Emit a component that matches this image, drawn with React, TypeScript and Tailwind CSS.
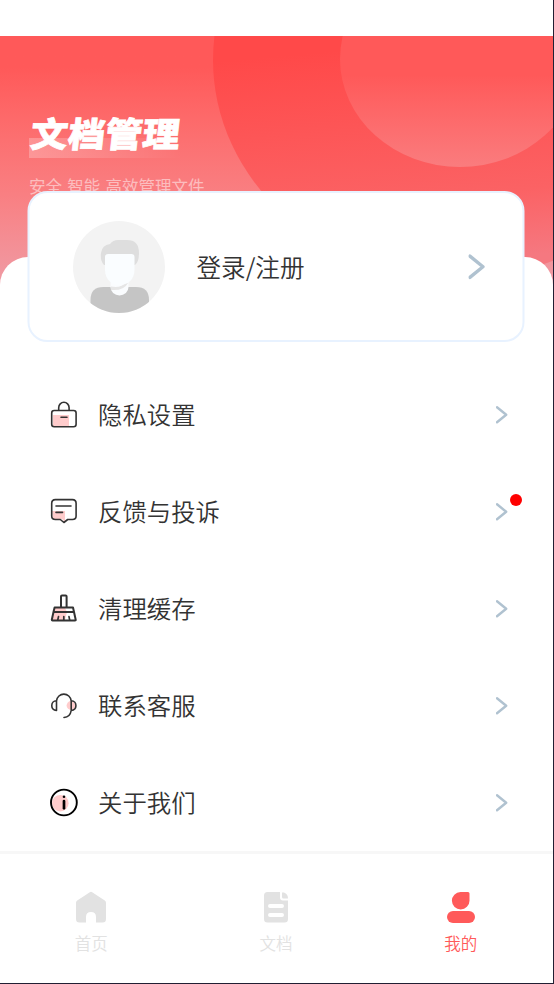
import type { ReactNode } from "react";

function Chevron({ className }: { className: string }) {
  return (
    <svg viewBox="0 0 12 18" className={className} fill="none" stroke="#b0c2d0" strokeWidth="2.4" strokeLinecap="round" strokeLinejoin="round">
      <path d="M1 1.3 10.2 8.800 1 16.3" />
    </svg>
  );
}

function Icon({ children }: { children: ReactNode }) {
  return (
    <svg viewBox="0 0 30 30" className="h-[30px] w-[30px] shrink-0" fill="none" stroke="#333333" strokeWidth="1.6" strokeLinecap="round" strokeLinejoin="round">
      {children}
    </svg>
  );
}

const lockIcon = (
  <Icon>
    <path d="M4 15h16v11.500H4z" fill="#ffcccc" stroke="none" />
    <rect x="2.7" y="10.500" width="24.4" height="16.3" rx="2.5" />
    <path d="M9.700 10V7.700a5.200 5.400 0 0 1 10.400 0V10M12 17.300h6" />
  </Icon>
);
const feedbackIcon = (
  <Icon>
    <path d="M3 14h13v11l-3-3H4z" fill="#ffcccc" stroke="none" />
    <path d="M6.400 2.600h17q3.700 0 3.700 3.700v12.700q0 3.500-3.700 3.500h-4.700L14.900 25.500l-3.600-3H6.400q-3.700 0-3.700-3.500V6.300q0-3.700 3.700-3.700ZM7 9h15M7 15.400h6.500" />
  </Icon>
);
const broomIcon = (
  <Icon>
    <path d="M6 14h10l2 4-2 8H3.500z" fill="#ffcccc" stroke="none" />
    <path strokeWidth="2" d="M12 13.500V2.500q0-1 1-1h3.600q1 0 1 1v11M5.600 13.500h18.400l1 4.500H4.500ZM4.500 18 2.800 25.800q0 .7.700.7h22.500q.8 0 .7-.7L25 18" />
    <path strokeWidth="1.700" d="M9.500 22.600l-.8 3.600M14.800 22.600v3.600M20 22.600l.7 3.600" />
  </Icon>
);
const serviceIcon = (
  <Icon>
    <circle cx="22" cy="14.500" r="4.400" fill="#ffcccc" stroke="none" />
    <path d="M7.500 9.800v9.700c-6.300.2-6.300-9.700 0-9.700ZM7.500 9.800a7.400 7.600 0 0 1 14.700 0M22.200 9.800v9.700c6.300.2 6.300-9.700 0-9.700ZM22.200 19.500c-.7 4.500-3.600 6.800-7.200 7" />
  </Icon>
);
const aboutIcon = (
  <Icon>
    <circle cx="11.300" cy="15.200" r="8.300" fill="#ffcccc" stroke="none" />
    <circle cx="14.900" cy="14.500" r="12.900" stroke="#000" strokeWidth="1.900" />
    <path d="M15 13V20.300" stroke="#000" strokeWidth="2.700" />
    <path d="M15 8.800h.01" stroke="#000" strokeWidth="2.600" />
  </Icon>
);

const rows = [
  { label: "隐私设置", icon: lockIcon },
  { label: "反馈与投诉", icon: feedbackIcon, unread: true },
  { label: "清理缓存", icon: broomIcon },
  { label: "联系客服", icon: serviceIcon },
  { label: "关于我们", icon: aboutIcon },
];

function Tab({ label, active, children }: { label: string; active?: boolean; children: ReactNode }) {
  return (
    <button className={"flex flex-1 flex-col items-center pt-[37px] " + (active ? "text-[#ff5a5a]" : "text-[#e2e2e2]")}>
      <svg viewBox="0 0 32 32" className="h-8 w-8" fill="currentColor">
        {children}
      </svg>
      <span className="mt-2 text-[16.500px] leading-6">{label}</span>
    </button>
  );
}

export default function App() {
  return (
    <div className="flex h-[984px] w-[554px] flex-col overflow-hidden border-r border-b border-[#211f33] bg-white font-['Noto_Sans_CJK_SC',sans-serif] font-[350] text-[#333]">
      <header className="relative mt-9 h-[264px] shrink-0 overflow-hidden bg-linear-to-b from-[#ff5959] from-12% via-[#f97f82] via-60% to-[#ed9faa]">
        <svg viewBox="0 0 553 264" className="absolute inset-0 h-full w-full">
          <defs>
            <linearGradient id="ring" x1="0" y1="0" x2="0.100" y2="1">
              <stop offset="0.500" stopColor="#ff4949" />
              <stop offset="0.850" stopColor="#fb6264" />
              <stop offset="1" stopColor="#f57880" />
            </linearGradient>
            <linearGradient id="disc" gradientUnits="userSpaceOnUse" x1="0" y1="0" x2="0" y2="131">
              <stop offset="0.300" stopColor="#ff5959" />
              <stop offset="1" stopColor="#fa7c7e" />
            </linearGradient>
          </defs>
          <ellipse cx="456" cy="24" rx="243" ry="219" fill="url(#ring)" />
          <ellipse cx="460" cy="23" rx="120" ry="108" fill="url(#disc)" />
        </svg>
        <div className="relative ml-[29px] pt-[78px]">
          <div className="h-11 w-[180px] bg-linear-to-r from-white/25 to-white/0 to-85% bg-[length:100%_20px] bg-bottom bg-no-repeat">
            <h1 className="origin-left -translate-y-0.5 -skew-x-6 scale-y-92 pl-[2px] text-[37.300px] leading-[41px] font-black whitespace-nowrap text-white [-webkit-text-stroke:0.800px_white]">文档管理</h1>
          </div>
          <p className="mt-4 text-[16.500px] leading-6 font-normal text-white/50 [word-spacing:1.600px]">安全 智能 高效管理文件</p>
        </div>
      </header>

      <main className="relative -mt-[43px] h-[594px] shrink-0 rounded-t-[28px] bg-white">
        <button className="mx-auto -mt-[66px] flex h-[151px] w-[497px] -translate-x-[0.500px] items-center rounded-[20px] border-2 border-[#e8f2ff] bg-white pr-[37px] pl-[43px]">
          <svg viewBox="0 0 92 92" className="h-[92px] w-[92px] translate-x-[0.500px]">
            <defs>
              <clipPath id="avatar">
                <circle cx="46" cy="46" r="46" />
              </clipPath>
            </defs>
            <g clipPath="url(#avatar)">
              <path fill="#f3f3f3" d="M0 0h92v92H0z" />
              <path fill="#c5c5c5" d="M17.500 92V79q0-13 13-13h32.500q13 0 13 13v13Z" />
              <path fill="#fafcfe" d="M37.500 59h18v7a9 8.500 0 0 1-18 0Z" />
              <path fill="#dedede" d="M31 44q-4-4-3-12 1-8 9-9 3-4 8-4h9q12 0 12 13 0 9-4 12Z" />
              <path fill="#e6e6e6" d="M38 65.500q10 2 15.500-4.500l1.500 1q-4 8-17 7Z" />
              <path fill="#fafdff" d="M35 33h23.500q3 0 3 3v13c0 20-29.500 20-29.500 0V36q0-3 3-3Z" />
            </g>
          </svg>
          <span className="ml-8 -translate-y-px text-[24.600px] leading-9">登录/注册</span>
          <Chevron className="ml-auto h-[26px] w-[17px]" />
        </button>

        <ul className="pt-[25px]">
          {rows.map((row) => (
            <li key={row.label} className="relative flex h-[96.800px] items-center pr-[45px] pl-[49px]">
              {row.icon}
              <span className="ml-[19px] -translate-y-px text-[24.400px] leading-9">{row.label}</span>
              <Chevron className="ml-auto h-[18px] w-3" />
              {row.unread && <i className="absolute top-[30px] right-[31px] h-3 w-3 rounded-full bg-[#ff0000]" />}
            </li>
          ))}
        </ul>
      </main>

      <nav className="relative -ml-px flex flex-1 border-t-[3px] border-[#f7f7f7] pb-4">
        <Tab label="首页">
          <path d="M14.800 1.200q1.200-.9 2.400 0L29.800 9.500q1.200.8 1.200 2.300V28q0 3.500-3.500 3.500H21V26q0-5-5-5t-5 5v5.500H4.500Q1 31.500 1 28V11.800q0-1.500 1.200-2.300Z" />
        </Tab>
        <Tab label="文档">
          <path fillRule="evenodd" d="M7.500 1H20v5.500q0 3 3 3h5V28q0 3.500-3.500 3.500h-17Q4 31.500 4 28V4.500Q4 1 7.500 1ZM10 13q-2 0-2 2t2 2h12q2 0 2-2t-2-2Zm0 9q-2 0-2 2t2 2h12q2 0 2-2t-2-2Z" />
          <path d="M22 1.500h2Q28 3 28 7.500h-4.500Q22 7.500 22 6Z" />
        </Tab>
        <Tab label="我的" active>
          <path d="M15.500 1H23q1.500 0 1.500 1.500v7.200A8.800 8.700 0 1 1 15.500 1Z" />
          <rect x="2" y="20" width="28" height="12" rx="6" />
        </Tab>
      </nav>
    </div>
  );
}
